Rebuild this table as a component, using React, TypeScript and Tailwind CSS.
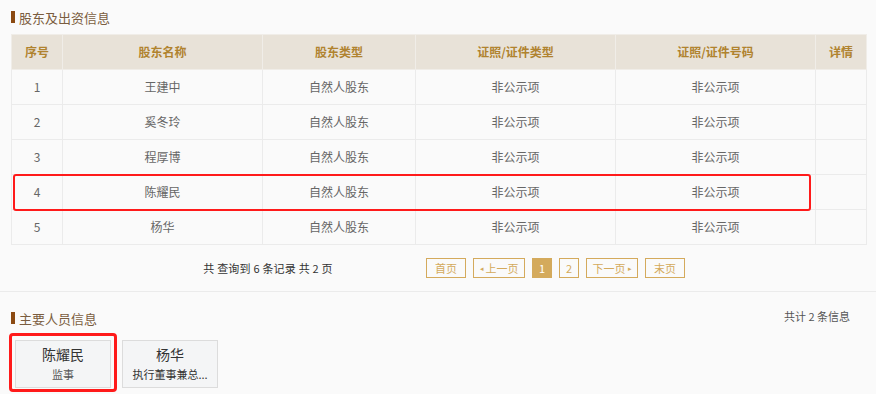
import React from 'react';

const rows = [
  { no: 1, name: '王建中' },
  { no: 2, name: '奚冬玲' },
  { no: 3, name: '程厚博' },
  { no: 4, name: '陈耀民' },
  { no: 5, name: '杨华' },
];

const cols = [
  { label: '序号', w: 'w-[51px]' },
  { label: '股东名称', w: 'w-[200px]' },
  { label: '股东类型', w: 'w-[153px]' },
  { label: '证照/证件类型', w: 'w-[200px]' },
  { label: '证照/证件号码', w: 'w-[200px]' },
  { label: '详情', w: 'w-[51px]' },
];

function SectionTitle({ text }: { text: string }) {
  return (
    <div className="flex items-center gap-[4px] h-[18px]">
      <span className="w-[4px] h-[12px] bg-[#8b4a12]" />
      <span className="text-[13px] text-[#7a5d40] leading-none">{text}</span>
    </div>
  );
}

function PageBtn({ children, active, w }: { children: React.ReactNode; active?: boolean; w: string }) {
  return (
    <span
      className={`${w} h-[20px] flex items-center justify-center border border-[#d4aa5c] text-[11px] ${
        active ? 'bg-[#d4aa5c] text-white' : 'text-[#d4aa5c]'
      }`}
    >
      {children}
    </span>
  );
}

export default function App() {
  return (
    <div className="w-[876px] h-[394px] bg-[#fafafa] overflow-hidden font-['Noto_Sans_CJK_SC','Noto_Sans',sans-serif]">
      <div className="pl-[11px] pt-[8px]">
        <SectionTitle text="股东及出资信息" />
      </div>

      <div className="relative ml-[11px] mt-[8px] w-[855px]">
        <table className="border-collapse table-fixed w-[855px] text-[12px]">
          <thead>
            <tr className="h-[35px] bg-[#e8e2d8]">
              {cols.map(c => (
                <th key={c.label} className={`${c.w} border border-[#f0ede8] font-bold text-[#b0832f] text-center`}>
                  {c.label}
                </th>
              ))}
            </tr>
          </thead>
          <tbody>
            {rows.map(r => (
              <tr key={r.no} className="h-[35px] bg-[#fafafa]">
                <td className="border border-[#ebebeb] text-center text-[#666]">{r.no}</td>
                <td className="border border-[#ebebeb] text-center text-[#666]">{r.name}</td>
                <td className="border border-[#ebebeb] text-center text-[#666]">自然人股东</td>
                <td className="border border-[#ebebeb] text-center text-[#666]">非公示项</td>
                <td className="border border-[#ebebeb] text-center text-[#666]">非公示项</td>
                <td className="border border-[#ebebeb]" />
              </tr>
            ))}
          </tbody>
        </table>
        {/* highlight on row 4 */}
        <div className="absolute left-[2px] top-[140px] w-[798px] h-[37px] border-2 border-[#ff1a1a] rounded-[3px]" />
      </div>

      <div className="flex items-center h-[47px] border-b border-[#ebebeb]">
        <div className="w-[426px] flex justify-center pl-[110px]">
          <span className="text-[11px] text-[#333] whitespace-nowrap tracking-[0.2px]">共 查询到 6 条记录 共 2 页</span>
        </div>
        <div className="flex items-center gap-[7px]">
          <PageBtn w="w-[40px]">首页</PageBtn>
          <PageBtn w="w-[52px]">
            <span className="text-[7px] mr-[2px]">◂</span>上一页
          </PageBtn>
          <PageBtn w="w-[20px]" active>1</PageBtn>
          <PageBtn w="w-[20px]">2</PageBtn>
          <PageBtn w="w-[52px]">
            下一页<span className="text-[7px] ml-[2px]">▸</span>
          </PageBtn>
          <PageBtn w="w-[40px]">末页</PageBtn>
        </div>
      </div>

      <div className="flex items-center justify-between pl-[11px] pr-[26px] pt-[17px]">
        <SectionTitle text="主要人员信息" />
        <span className="text-[11px] text-[#555] -mt-[3px]">共计 2 条信息</span>
      </div>

      <div className="flex gap-[11px] pl-[15px] mt-[13px]">
        <div className="relative">
          <div className="w-[96px] h-[48px] bg-[#f4f5f6] border border-[#dcdcdc] flex flex-col items-center justify-center">
            <span className="text-[14px] text-[#333] leading-[18px]">陈耀民</span>
            <span className="text-[11px] text-[#555] leading-[18px] mt-[2px]">监事</span>
          </div>
          <div className="absolute -left-[6px] -top-[7px] w-[108px] h-[59px] border-[3px] border-[#ff1a1a] rounded-[4px]" />
        </div>
        <div className="w-[96px] h-[48px] bg-[#f4f5f6] border border-[#dcdcdc] flex flex-col items-center justify-center">
          <span className="text-[14px] text-[#333] leading-[18px]">杨华</span>
          <span className="text-[11px] text-[#333] leading-[18px] mt-[2px]">执行董事兼总...</span>
        </div>
      </div>
    </div>
  );
}
